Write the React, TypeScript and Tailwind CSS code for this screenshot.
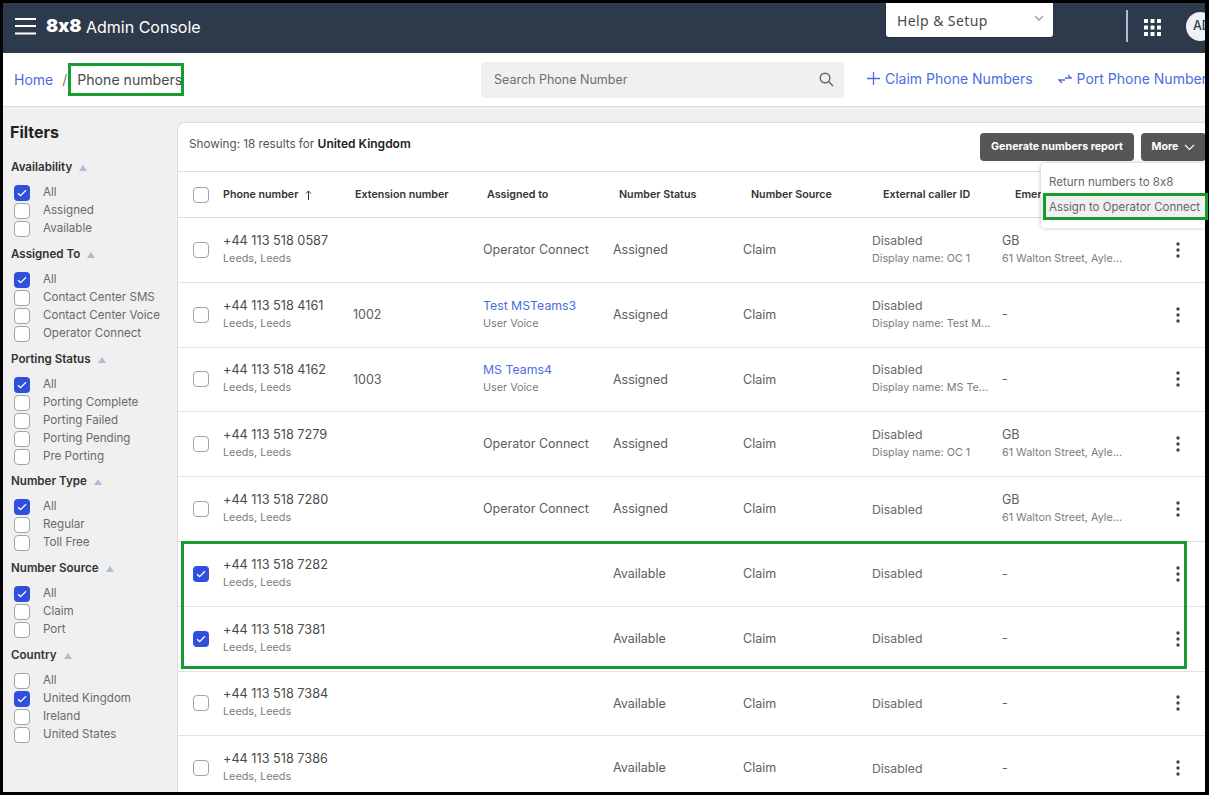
import React from "react";

const Check = ({ on = false }: { on?: boolean }) => (
  <span className={on ? "flex h-4 w-4 shrink-0 items-center justify-center rounded-[4px] bg-[#2f4fdc]" : "block h-4 w-4 shrink-0 rounded-[4px] border border-[#a3a3a3] bg-white"}>
    {on && (
      <svg width="10" height="8" viewBox="0 0 10 8" fill="none">
        <path d="M1 4.2 3.6 6.6 9 1.2" stroke="#fff" strokeWidth="1.3" />
      </svg>
    )}
  </span>
);

const filters: { title: string; items: [string, boolean][] }[] = [
  { title: "Availability", items: [["All", true], ["Assigned", false], ["Available", false]] },
  { title: "Assigned To", items: [["All", true], ["Contact Center SMS", false], ["Contact Center Voice", false], ["Operator Connect", false]] },
  { title: "Porting Status", items: [["All", true], ["Porting Complete", false], ["Porting Failed", false], ["Porting Pending", false], ["Pre Porting", false]] },
  { title: "Number Type", items: [["All", true], ["Regular", false], ["Toll Free", false]] },
  { title: "Number Source", items: [["All", true], ["Claim", false], ["Port", false]] },
  { title: "Country", items: [["All", false], ["United Kingdom", true], ["Ireland", false], ["United States", false]] },
];

type Row = {
  phone: string; ext?: string; assigned?: string; link?: boolean; status: string;
  display?: string; gb?: boolean; checked?: boolean;
};

const rows: Row[] = [
  { phone: "+44 113 518 0587", assigned: "Operator Connect", status: "Assigned", display: "Display name: OC 1", gb: true },
  { phone: "+44 113 518 4161", ext: "1002", assigned: "Test MSTeams3", link: true, status: "Assigned", display: "Display name: Test M..." },
  { phone: "+44 113 518 4162", ext: "1003", assigned: "MS Teams4", link: true, status: "Assigned", display: "Display name: MS Te..." },
  { phone: "+44 113 518 7279", assigned: "Operator Connect", status: "Assigned", display: "Display name: OC 1", gb: true },
  { phone: "+44 113 518 7280", assigned: "Operator Connect", status: "Assigned", gb: true },
  { phone: "+44 113 518 7282", status: "Available", checked: true },
  { phone: "+44 113 518 7381", status: "Available", checked: true },
  { phone: "+44 113 518 7384", status: "Available" },
  { phone: "+44 113 518 7386", status: "Available" },
];

const headers = ["Phone number", "Extension number", "Assigned to", "Number Status", "Number Source", "External caller ID", "Emergency"];

export default function App() {
  return (
    <div className="relative h-[795px] w-[1209px] border-t-[3px] border-r-[4px] border-b-[3px] border-l-[3px] border-black font-['Inter',sans-serif] text-[#333] [font-feature-settings:'calt'_0]">
      <div className="h-full overflow-hidden bg-[#f0f0f0]">
        <header className="flex h-[50px] items-start bg-[#2d3a4b] text-white">
          <svg className="ml-3 mt-[15px] shrink-0" width="21" height="17" viewBox="0 0 21 17" fill="none">
            <path d="M0 1h21M0 8h21M0 15.5h21" stroke="#fff" strokeWidth="2" />
          </svg>
          <span className="ml-[10px] mt-[9px] w-[40px] shrink-0 text-[18px] font-black leading-[28px]">8x8</span>
          <span className="mt-[12px] w-[115px] shrink-0 whitespace-nowrap text-[16px] leading-[24px]">Admin Console</span>
          <div className="ml-[685px] flex h-[34px] w-[167px] shrink-0 items-center justify-between rounded-b-[3px] bg-white pl-[11px] pr-[9px] text-[#4a4a4a] shadow-sm">
            <span className="font-['Noto_Sans',sans-serif] text-[14px] tracking-[0.4px]">Help &amp; Setup</span>
            <svg className="mb-[4px]" width="10" height="6" viewBox="0 0 10 6" fill="none">
              <path d="M1 1l4 4 4-4" stroke="#a8a8a8" strokeWidth="1.6" />
            </svg>
          </div>
          <div className="ml-[73px] mt-[7px] h-[32px] w-[2px] shrink-0 bg-[#aebbd0]" />
          <svg className="ml-[16px] mt-[16px] shrink-0" width="17" height="17" viewBox="0 0 17 17" fill="#fff">
            {[0, 6.5, 13].map((y) => [0, 6.5, 13].map((x) => <rect key={`${x}-${y}`} x={x} y={y} width="4" height="4" rx="0.5" />))}
          </svg>
          <div className="ml-[25px] mt-[9px] flex h-[29px] w-[29px] shrink-0 items-center rounded-full bg-[#eef2f7] pl-[7px] text-[12.5px] font-medium text-[#2d3a4b]">AD</div>
        </header>

        <div className="flex h-[54px] items-center border-b border-[#dcdcdc] bg-white">
          <nav className="flex w-[478px] shrink-0 items-center pl-[11px] text-[14px]">
            <span className="text-[#5569e0]">Home</span>
            <span className="ml-[9px] text-[#777]">/</span>
            <span className="ml-[10px] text-[14.1px] text-[#4a4a4a]">Phone numbers</span>
          </nav>
          <div className="flex h-[36px] w-[363px] shrink-0 items-center justify-between rounded-[4px] bg-[#f0f0f0] pl-[13px] pr-[10px]">
            <span className="pt-[1px] text-[12.5px] text-[#6f6f6f]">Search Phone Number</span>
            <svg width="15" height="15" viewBox="0 0 15 15" fill="none" stroke="#666" strokeWidth="1.4">
              <circle cx="6" cy="6" r="4.8" />
              <path d="M9.6 9.6 14 14" />
            </svg>
          </div>
          <div className="ml-[23px] flex shrink-0 items-center text-[14px] text-[#4a6ee0]">
            <svg className="mb-[2px]" width="13" height="13" viewBox="0 0 13 13" fill="none" stroke="#4a6ee0" strokeWidth="1.3">
              <path d="M6.5 0v13M0 6.5h13" />
            </svg>
            <span className="mb-[2px] ml-[5px]">Claim Phone Numbers</span>
            <svg className="mb-[2px] ml-[25px]" width="14" height="10" viewBox="0 0 14 10" fill="none" stroke="#4a6ee0" strokeWidth="1.3">
              <path d="M10 1l3 3H7M4 9 1 6h6" />
            </svg>
            <span className="mb-[2px] ml-[5px] whitespace-nowrap">Port Phone Numbers</span>
          </div>
        </div>

        <div className="flex">
          <aside className="w-[174px] shrink-0 pl-[8px] pt-[13px]">
            <h2 className="-ml-[1px] mb-[15px] h-[24px] text-[16px] font-bold leading-[24px] text-[#222]">Filters</h2>
            {filters.map((f) => (
              <section key={f.title} className={f.title === "Porting Status" ? "mb-[7px]" : "mb-[8px]"}>
                <div className="mb-[7px] flex h-[18px] items-center text-[11.6px] font-semibold text-[#333]">
                  {f.title}
                  <svg className="ml-[7px]" width="8" height="6" viewBox="0 0 8 6" fill="#aebcd4">
                    <path d="M4 0 8 6H0z" />
                  </svg>
                </div>
                {f.items.map(([label, on]) => (
                  <div key={label} className="flex h-[18px] items-center pl-[3px] text-[11.6px] text-[#6a6a6a]">
                    <Check on={on} />
                    <span className="ml-[13px] whitespace-nowrap">{label}</span>
                  </div>
                ))}
              </section>
            ))}
          </aside>

          <main className="mt-[15px] h-[700px] flex-1 overflow-hidden rounded-tl-[8px] border-t border-l border-[#dedede] bg-white">
            <div className="flex h-[49px] items-start justify-between border-b border-[#dedede]">
              <p className="ml-[11px] mt-[12px] text-[11.7px] text-[#555]">
                Showing: 18 results for <b className="text-[12px] font-semibold text-[#222]">United Kingdom</b>
              </p>
              <div className="-mr-[1px] mt-[10px] flex gap-[7px]">
                <button className="h-[28px] w-[154px] rounded-[4px] bg-[#565656] text-[10.7px] font-bold text-white">Generate numbers report</button>
                <button className="flex h-[28px] w-[65px] items-center justify-center gap-[6px] rounded-[4px] bg-[#565656] text-[10.7px] font-bold text-white">
                  More
                  <svg width="11" height="7" viewBox="0 0 11 7" fill="none" stroke="#fff" strokeWidth="1.1">
                    <path d="M1 1l4.5 4.5L10 1" />
                  </svg>
                </button>
              </div>
            </div>
            <div className="grid h-[46px] grid-cols-[45px_132px_132px_132px_132px_132px_132px_132px] items-center border-b border-[#dedede] pt-[1px] text-[10.7px] font-semibold text-[#333]">
              <span className="ml-[15px]"><Check /></span>
              {headers.map((h, i) => (
                <span key={h} className="flex items-center whitespace-nowrap">
                  {h}
                  {i === 0 && (
                    <svg className="ml-[7px]" width="7" height="10" viewBox="0 0 7 10" fill="none" stroke="#333" strokeWidth="1">
                      <path d="M3.5 10V1M1 3.5l2.5-2.5L6 3.5" />
                    </svg>
                  )}
                </span>
              ))}
            </div>
            {rows.map((r) => (
              <div key={r.phone} className="grid h-[64.8px] grid-cols-[45px_130px_130px_130px_130px_129px_130px_203px] items-center border-b border-[#e2e2e2] text-[12.5px] text-[#5c5c5c]">
                <span className="ml-[15px]"><Check on={r.checked} /></span>
                <div className="mb-[0.2px]">
                  <div className="text-[12.7px] leading-[18px] text-[#4a4a4a]">{r.phone}</div>
                  <div className="text-[10.8px] leading-[18px] text-[#7c7c7c]">Leeds, Leeds</div>
                </div>
                <div className="pt-[1px]">{r.ext}</div>
                {r.link ? (
                  <div className="mb-[0.2px]">
                    <div className="text-[12.3px] leading-[18px] text-[#4a6ee0]">{r.assigned}</div>
                    <div className="text-[10.8px] leading-[18px] text-[#7c7c7c]">User Voice</div>
                  </div>
                ) : (
                  <div className="pt-[1px]">{r.assigned}</div>
                )}
                <div className="pt-[1px]">{r.status}</div>
                <div className="pt-[1px]">Claim</div>
                <div className={r.display ? "mb-[0.2px]" : "pt-[1px]"}>
                  <div className="text-[12.3px] leading-[18px] text-[#6a6a6a]">Disabled</div>
                  {r.display && <div className="whitespace-nowrap text-[10.8px] leading-[18px] text-[#7c7c7c]">{r.display}</div>}
                </div>
                <div className="relative pr-[20px]">
                  {r.gb ? (
                    <>
                      <div className="leading-[18px]">GB</div>
                      <div className="whitespace-nowrap text-[10.8px] leading-[18px] text-[#7c7c7c]">61 Walton Street, Ayle...</div>
                    </>
                  ) : (
                    <span>-</span>
                  )}
                  <svg className="absolute right-[25px] top-1/2 -translate-y-1/2" width="4" height="16" viewBox="0 0 4 16" fill="#444">
                    <circle cx="2" cy="2" r="1.7" /><circle cx="2" cy="8" r="1.7" /><circle cx="2" cy="14" r="1.7" />
                  </svg>
                </div>
              </div>
            ))}
          </main>
        </div>
      </div>

      <div className="absolute left-[1038px] top-[160px] h-[65px] w-[164px] rounded-[4px] bg-white pt-[7px] text-[11.5px] text-[#666] shadow-[0_0_4px_rgba(0,0,0,0.25)]">
        <div className="flex h-[25px] items-center pl-[8px]">Return numbers to 8x8</div>
        <div className="flex h-[25px] items-center whitespace-nowrap bg-[#f0f0f0] pl-[8px]">Assign to Operator Connect</div>
      </div>

      <div className="pointer-events-none absolute left-[65px] top-[60px] h-[33px] w-[116px] border-[3px] border-[#179a2f]" />
      <div className="pointer-events-none absolute left-[1040px] top-[190px] h-[27px] w-[165px] border-[3px] border-[#179a2f]" />
      <div className="pointer-events-none absolute left-[178px] top-[538px] h-[128px] w-[1006px] border-[3px] border-[#179a2f]" />
    </div>
  );
}
